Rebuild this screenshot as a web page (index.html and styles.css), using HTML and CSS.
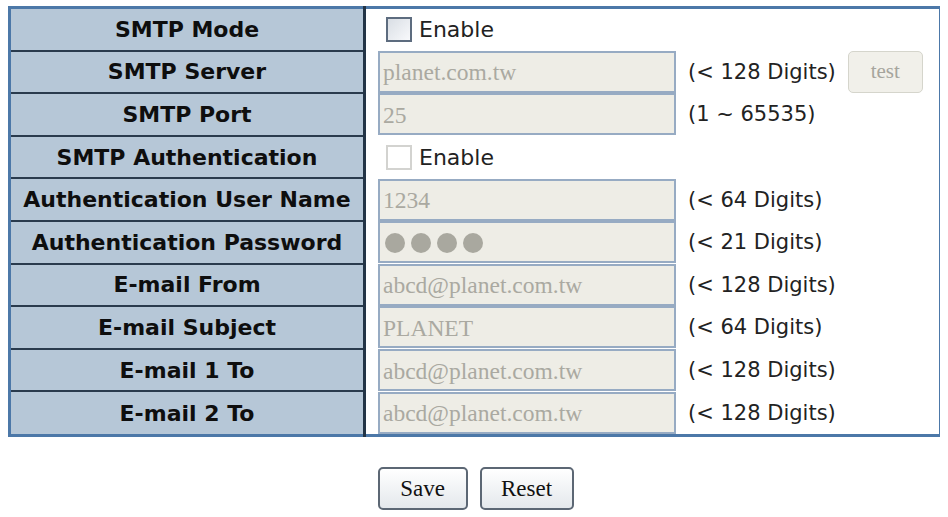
FILE: index.html
```html
<!DOCTYPE html>
<html lang="en">
<head>
    <meta charset="UTF-8">
    <title>SMTP Configuration</title>
    <link rel="stylesheet" href="styles.css">
</head>
<body>
    <table class="smtp">
        <tbody>
            <tr>
                <td class="param">SMTP Mode</td>
                <td class="value"><div class="line">
                    <input type="checkbox" class="check check-on" id="smtp_mode">
                    <label for="smtp_mode">Enable</label>
                </div></td>
            </tr>
            <tr>
                <td class="param">SMTP Server</td>
                <td class="value"><div class="line">
                    <input type="text" class="field" value="planet.com.tw" disabled>
                    <span class="hint">(&lt; 128 Digits)</span>
                    <button class="test" disabled>test</button>
                </div></td>
            </tr>
            <tr>
                <td class="param">SMTP Port</td>
                <td class="value"><div class="line">
                    <input type="text" class="field" value="25" disabled>
                    <span class="hint">(1 ~ 65535)</span>
                </div></td>
            </tr>
            <tr>
                <td class="param">SMTP Authentication</td>
                <td class="value"><div class="line">
                    <input type="checkbox" class="check" id="smtp_auth" disabled>
                    <label for="smtp_auth">Enable</label>
                </div></td>
            </tr>
            <tr>
                <td class="param">Authentication User Name</td>
                <td class="value"><div class="line">
                    <input type="text" class="field" value="1234" disabled>
                    <span class="hint">(&lt; 64 Digits)</span>
                </div></td>
            </tr>
            <tr>
                <td class="param">Authentication Password</td>
                <td class="value"><div class="line">
                    <div class="field masked"><span class="dot"></span><span class="dot"></span><span class="dot"></span><span class="dot"></span></div>
                    <span class="hint">(&lt; 21 Digits)</span>
                </div></td>
            </tr>
            <tr>
                <td class="param">E-mail From</td>
                <td class="value"><div class="line">
                    <input type="text" class="field" value="abcd@planet.com.tw" disabled>
                    <span class="hint">(&lt; 128 Digits)</span>
                </div></td>
            </tr>
            <tr>
                <td class="param">E-mail Subject</td>
                <td class="value"><div class="line">
                    <input type="text" class="field" value="PLANET" disabled>
                    <span class="hint">(&lt; 64 Digits)</span>
                </div></td>
            </tr>
            <tr>
                <td class="param">E-mail 1 To</td>
                <td class="value"><div class="line">
                    <input type="text" class="field" value="abcd@planet.com.tw" disabled>
                    <span class="hint">(&lt; 128 Digits)</span>
                </div></td>
            </tr>
            <tr>
                <td class="param">E-mail 2 To</td>
                <td class="value"><div class="line">
                    <input type="text" class="field" value="abcd@planet.com.tw" disabled>
                    <span class="hint">(&lt; 128 Digits)</span>
                </div></td>
            </tr>
        </tbody>
    </table>
    <div class="actions">
        <button class="btn btn-save">Save</button>
        <button class="btn btn-reset">Reset</button>
    </div>
</body>
</html>
```

FILE: styles.css
```css
body {
    margin: 6px 8px;
    background-color: #fff;
    font-family: "DejaVu Sans", Verdana, sans-serif;
}
table.smtp {
    width: 934px;
    border-collapse: collapse;
    border: 3px solid #4c78a8;
}
.smtp td {
    height: 40.6px;
    padding: 0;
}
.smtp tr:last-child td {
    height: 42px;
}
.param {
    width: 352px;
    background-color: #b6c7d7;
    border-right: 3px solid #233446;
    border-bottom: 2px solid #2a3b4d;
    color: #0e0e0e;
    font-weight: bold;
    font-size: 22px;
    text-align: center;
}
.value {
    padding-left: 12px !important;
    background-color: #fff;
}
.line {
    display: flex;
    align-items: center;
    gap: 12px;
}
.field {
    box-sizing: border-box;
    width: 298px;
    height: 42px;
    margin: 0;
    padding: 2px 3px 0;
    border: 2px solid #97abc3;
    background-color: #eeede6;
    color: #aaa9a1;
    font-family: "Liberation Serif", "Times New Roman", serif;
    font-size: 23.5px;
}
.masked {
    display: flex;
    align-items: center;
    gap: 6px;
    padding-left: 5px;
}
.dot {
    width: 20px;
    height: 20px;
    border-radius: 50%;
    background-color: #a9a89f;
}
.hint {
    color: #222;
    font-size: 21px;
}
.check {
    appearance: none;
    -webkit-appearance: none;
    box-sizing: border-box;
    width: 26px;
    height: 25px;
    margin: 0 0 0 8px;
    border: 2px solid #d3d3d0;
    background-color: #fff;
}
.check-on {
    border-color: #5d6c7f;
    background: linear-gradient(135deg, #d9dee5, #f8f9fb);
}
.line label {
    margin-left: -5px;
    color: #222;
    font-size: 22px;
}
.test {
    width: 75px;
    height: 42px;
    border: 1px solid #d5d5cc;
    border-radius: 5px;
    background-color: #f1f0ea;
    color: #a6a59d;
    font-family: "Liberation Serif", "Times New Roman", serif;
    font-size: 21px;
}
.actions {
    margin-top: 30px;
    display: flex;
    justify-content: center;
    gap: 12px;
    width: 935px;
}
.btn {
    height: 43px;
    border: 2px solid #5c6774;
    border-radius: 5px;
    background: linear-gradient(#ffffff, #e4e8ec);
    color: #111;
    font-family: "Liberation Serif", "Times New Roman", serif;
    font-size: 23px;
}
.btn-save {
    width: 90px;
}
.btn-reset {
    width: 94px;
}
```
